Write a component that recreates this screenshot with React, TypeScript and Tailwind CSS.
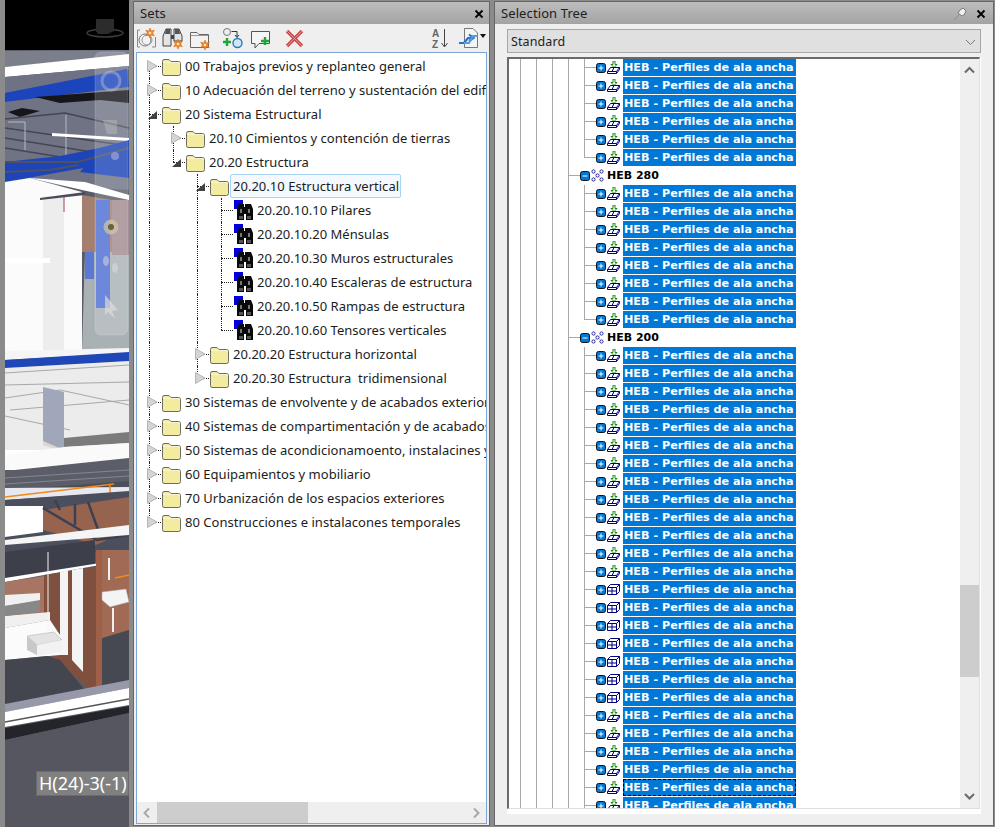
import type { ReactNode } from "react";

const uiFont = "font-['Noto_Sans',sans-serif]";

type SetRow = {
  label: string;
  level: number;
  guides: boolean[];
  state?: "open" | "closed";
  kind?: "folder" | "set";
  last?: boolean;
  first?: boolean;
  selected?: boolean;
};

const setRows: SetRow[] = [
  { label: "00 Trabajos previos y replanteo general", level: 0, guides: [], state: "closed", first: true },
  { label: "10 Adecuación del terreno y sustentación del edificio", level: 0, guides: [], state: "closed" },
  { label: "20 Sistema Estructural", level: 0, guides: [], state: "open" },
  { label: "20.10 Cimientos y contención de tierras", level: 1, guides: [true], state: "closed" },
  { label: "20.20 Estructura", level: 1, guides: [true], state: "open", last: true },
  { label: "20.20.10 Estructura vertical", level: 2, guides: [true, false], state: "open", selected: true },
  { label: "20.20.10.10 Pilares", level: 3, guides: [true, false, true], kind: "set" },
  { label: "20.20.10.20 Ménsulas", level: 3, guides: [true, false, true], kind: "set" },
  { label: "20.20.10.30 Muros estructurales", level: 3, guides: [true, false, true], kind: "set" },
  { label: "20.20.10.40 Escaleras de estructura", level: 3, guides: [true, false, true], kind: "set" },
  { label: "20.20.10.50 Rampas de estructura", level: 3, guides: [true, false, true], kind: "set" },
  { label: "20.20.10.60 Tensores verticales", level: 3, guides: [true, false, true], kind: "set", last: true },
  { label: "20.20.20 Estructura horizontal", level: 2, guides: [true, false], state: "closed" },
  { label: "20.20.30 Estructura  tridimensional", level: 2, guides: [true, false], state: "closed", last: true },
  { label: "30 Sistemas de envolvente y de acabados exteriores", level: 0, guides: [], state: "closed" },
  { label: "40 Sistemas de compartimentación y de acabados interiores", level: 0, guides: [], state: "closed" },
  { label: "50 Sistemas de acondicionamoento, instalacines y equipos", level: 0, guides: [], state: "closed" },
  { label: "60 Equipamientos y mobiliario", level: 0, guides: [], state: "closed" },
  { label: "70 Urbanización de los espacios exteriores", level: 0, guides: [], state: "closed" },
  { label: "80 Construcciones e instalacones temporales", level: 0, guides: [], state: "closed", last: true },
];

type TreeRow = {
  label: string;
  icon: "tile" | "cube" | "group";
  open?: boolean;
  end?: boolean;
  focus?: boolean;
};

const leaf = (icon: "tile" | "cube", extra: Partial<TreeRow> = {}): TreeRow => ({
  label: "HEB - Perfiles de ala ancha",
  icon,
  ...extra,
});

const treeRows: TreeRow[] = [
  ...Array.from({ length: 5 }, () => leaf("tile")),
  leaf("tile", { end: true }),
  { label: "HEB 280", icon: "group", open: true },
  ...Array.from({ length: 7 }, () => leaf("tile")),
  leaf("tile", { end: true }),
  { label: "HEB 200", icon: "group", open: true },
  ...Array.from({ length: 13 }, () => leaf("tile")),
  ...Array.from({ length: 7 }, () => leaf("cube")),
  ...Array.from({ length: 4 }, () => leaf("tile")),
  leaf("tile", { focus: true }),
  leaf("tile"),
];

function Folder() {
  return (
    <svg width="20" height="20" viewBox="0 0 20 20" className="shrink-0">
      <path
        d="M1.5 5.5 Q1.5 3.5 3 3.5 H8 L10 5.5 H17.5 Q19.5 5.5 19.5 7.5 V17.5 Q19.5 19.5 17.5 19.5 H3 Q1.5 19.5 1.5 17.5 Z"
        fill="#f3eb9f"
        stroke="#6d6d60"
      />
      <path d="M2.5 6.5 H18.5" stroke="#fbf7cf" />
    </svg>
  );
}

function Binoculars() {
  return (
    <svg width="20" height="21" viewBox="0 0 20 21" className="shrink-0">
      <rect x="0" y="0" width="9" height="9" fill="#0000d8" />
      <path d="M5 4 H10 V7 H11 V4 H17 L19 9 V20 H12 V14 H10 V20 H3 V9 Z" fill="#0a0a0a" />
      <rect x="6" y="9" width="2" height="4" fill="#777" />
      <rect x="14" y="9" width="2" height="4" fill="#777" />
      <rect x="5" y="16" width="4" height="3" fill="#555" />
      <rect x="13" y="16" width="4" height="3" fill="#555" />
    </svg>
  );
}

function Expander({ state }: { state: "open" | "closed" }) {
  return (
    <svg width="11" height="12" viewBox="0 0 11 12" className="absolute left-[-2px] top-[6px]">
      {state === "closed" ? (
        <path d="M0.5 0.5 L10 6 L0.5 11.5 Z" fill="#d4d4d4" stroke="#b5b5b5" />
      ) : (
        <path d="M10 3 V11 H1 Z" fill="#404040" />
      )}
    </svg>
  );
}

function SetTreeRow({ row }: { row: SetRow }) {
  return (
    <div className="flex h-[24px] shrink-0 items-stretch">
      {row.guides.map((on, i) => (
        <div key={i} className={`w-[24px] shrink-0 ${on ? "border-l border-dotted border-[#222]" : ""}`} />
      ))}
      <div className="relative w-[12px] shrink-0">
        <div
          className={`absolute left-0 w-0 border-l border-dotted border-[#222] ${
            row.first ? "top-[12px] bottom-0" : row.last ? "top-0 h-[12px]" : "top-0 bottom-0"
          }`}
        />
        <div className="absolute left-0 right-0 top-[12px] border-t border-dotted border-[#222]" />
        {row.state && <Expander state={row.state} />}
      </div>
      <div className={`flex items-center ${row.kind === "set" ? "ml-[1px]" : ""}`}>
        {row.kind === "set" ? <Binoculars /> : <Folder />}
      </div>
      <span
        className={`self-center whitespace-pre text-[13px] leading-[22px] tracking-[0.02px] text-[#1c1c1c] ${
          row.selected
            ? "ml-[1px] h-[24px] rounded-[2px] border border-[#a8d4f5] bg-[#f3f9fe] pl-[2px] pr-[1px]"
            : row.kind === "set"
              ? "ml-[3px]"
              : "ml-[4px]"
        }`}
      >
        {row.label}
      </span>
    </div>
  );
}

function Star({ x, y }: { x: number; y: number }) {
  return (
    <g transform={`translate(${x} ${y})`}>
      <path
        d="M0 -5 L1.3 -2 L4.3 -2.8 L2.6 0 L4.3 2.8 L1.3 2 L0 5 L-1.3 2 L-4.3 2.8 L-2.6 0 L-4.3 -2.8 L-1.3 -2 Z"
        fill="#f08a24"
        stroke="#c8601a"
        strokeWidth="0.5"
      />
      <circle r="1.3" fill="#ffe9b0" />
    </g>
  );
}

function GreenPlus({ x, y }: { x: number; y: number }) {
  return <path d={`M${x - 4} ${y} H${x + 4} M${x} ${y - 4} V${y + 4}`} stroke="#1fa637" strokeWidth="2.4" />;
}

function ToolIcon({ width, children }: { width: number; children: ReactNode }) {
  return (
    <svg width={width} height="24" viewBox={`0 0 ${width} 24`} className="shrink-0">
      {children}
    </svg>
  );
}

function SetsToolbar() {
  return (
    <div className="flex h-[28px] items-center pl-[2px] pr-[3px]">
      <ToolIcon width={22}>
        <path d="M4 4 H1.5 V21 H4 M16 21 H19.5 V11" fill="none" stroke="#8a8a8a" />
        <circle cx="9" cy="14" r="6" fill="#f2f2f2" stroke="#777" />
        <circle cx="11" cy="14" r="5" fill="none" stroke="#999" />
        <Star x={14} y={7} />
      </ToolIcon>
      <div className="w-[4px]" />
      <ToolIcon width={22}>
        <path d="M4 3 H9 V20 H1 V10 Z M12 3 H17 L20 10 V15 H12 Z" fill="#e4e4e4" stroke="#444" />
        <path d="M4 3 H8 V8 H3 Z M13 3 H17 L18 8 H13 Z" fill="#555" />
        <path d="M9 9 H12 V13 H9 Z" fill="#444" />
        <Star x={16} y={18} />
      </ToolIcon>
      <div className="w-[5px]" />
      <ToolIcon width={22}>
        <path d="M1.5 6.5 H8 L10 8.5 H19.5 V21.5 H1.5 Z" fill="#f2f2f2" stroke="#666" />
        <path d="M2 9.5 H19" stroke="#999" />
        <Star x={16} y={19} />
      </ToolIcon>
      <div className="w-[11px]" />
      <ToolIcon width={22}>
        <circle cx="5" cy="6" r="3.5" fill="#eee" stroke="#777" />
        <path d="M9.5 5.5 H15 V11 M13 9 L15 11.5 L17 9" fill="none" stroke="#333" />
        <GreenPlus x={5} y={16} />
        <circle cx="15.5" cy="17" r="4.5" fill="#cfe6f8" stroke="#2c78b8" strokeWidth="1.4" />
      </ToolIcon>
      <div className="w-[6px]" />
      <ToolIcon width={22}>
        <path d="M1.5 5.5 H19.5 V17.5 H9 L5 22 V17.5 H1.5 Z" fill="#f5f5f5" stroke="#555" />
        <GreenPlus x={15} y={15} />
      </ToolIcon>
      <div className="w-[11px]" />
      <ToolIcon width={22}>
        <path d="M4 5 L19 20 M19 5 L4 20" stroke="#c9494a" strokeWidth="3.4" />
        <path d="M4 5 L19 20 M19 5 L4 20" stroke="#ec8f8d" strokeWidth="1" />
      </ToolIcon>
      <div className="ml-auto flex items-center">
        <ToolIcon width={18}>
          <text x="1" y="11" className="font-['Liberation_Sans',sans-serif] text-[10px] font-bold" fill="#666">
            A
          </text>
          <text x="1" y="22" className="font-['Liberation_Sans',sans-serif] text-[10px] font-bold" fill="#666">
            Z
          </text>
          <path d="M13.5 3 V20 M10.5 17 L13.5 21 L16.5 17" fill="none" stroke="#444" />
        </ToolIcon>
        <div className="w-[9px]" />
        <ToolIcon width={22}>
          <path d="M6.5 2.5 H15 L19.5 7 V21.5 H6.5 Z" fill="#f4f4f4" stroke="#777" />
          <path d="M1 17 H6 L10 12 H15 M11 8.5 L15.5 12 L11 15" fill="none" stroke="#2b73c6" strokeWidth="2.2" />
          <path d="M20 10 H15 L11 17 H6" fill="none" stroke="#5a9ae0" strokeWidth="2.2" />
        </ToolIcon>
        <svg width="6" height="4" viewBox="0 0 6 4" className="mb-[4px] shrink-0">
          <path d="M0 0 H6 L3 4 Z" fill="#111" />
        </svg>
      </div>
    </div>
  );
}

function ScrollChevron({
  dir,
  color = "#6a6a6a",
  weight = 2,
}: {
  dir: "up" | "down" | "left" | "right";
  color?: string;
  weight?: number;
}) {
  const d = {
    up: "M1 7 L5.5 2.5 L10 7",
    down: "M1 2.5 L5.5 7 L10 2.5",
    left: "M7 1 L2.5 5.5 L7 10",
    right: "M3 1 L7.5 5.5 L3 10",
  }[dir];
  return (
    <svg width="11" height="11" viewBox="0 0 11 10" className="shrink-0">
      <path d={d} fill="none" stroke={color} strokeWidth={weight} />
    </svg>
  );
}

function PlusBox({ open }: { open?: boolean }) {
  return (
    <svg width="10" height="10" viewBox="0 0 10 10" className="shrink-0">
      <rect x="0.5" y="0.5" width="9" height="9" rx="2" fill="#0078d7" stroke="#0a1420" />
      <path d={open ? "M2.5 5 H7.5" : "M2.5 5 H7.5 M5 2.5 V7.5"} stroke="#fff" />
    </svg>
  );
}

function NodeIcon({ icon }: { icon: TreeRow["icon"] }) {
  if (icon === "group") {
    return (
      <svg width="13" height="13" viewBox="0 0 13 13" className="shrink-0">
        <path d="M2 2 L11 11 M11 2 L2 11" stroke="#8a8ab8" strokeDasharray="1 1" />
        <circle cx="2.5" cy="2.5" r="1.6" fill="#fff" stroke="#000080" strokeWidth="0.8" />
        <circle cx="10.5" cy="2.5" r="1.6" fill="#fff" stroke="#000080" strokeWidth="0.8" />
        <circle cx="6.5" cy="6.5" r="1.6" fill="#fff" stroke="#000080" strokeWidth="0.8" />
        <circle cx="2.5" cy="10.5" r="1.6" fill="#fff" stroke="#000080" strokeWidth="0.8" />
        <circle cx="10.5" cy="10.5" r="1.6" fill="#fff" stroke="#000080" strokeWidth="0.8" />
      </svg>
    );
  }
  if (icon === "cube") {
    return (
      <svg width="13" height="11" viewBox="0 0 13 11" className="shrink-0">
        <path
          d="M0.5 3.5 H9.5 V10.5 H0.5 Z M0.5 3.5 L3.5 0.5 H12.5 L9.5 3.5 M12.5 0.5 V7.5 L9.5 10.5 M0.5 7 H9.5 M5 3.5 V10.5"
          fill="none"
          stroke="#000080"
        />
      </svg>
    );
  }
  return (
    <svg width="13" height="13" viewBox="0 0 13 13" className="shrink-0">
      <path d="M6 0 H8 V3.5 H10 L7 6.5 L4 3.5 H6 Z" fill="#fff" stroke="#008000" strokeWidth="0.9" />
      <path
        d="M3.5 6.5 H12.5 V8.5 L9.5 12.5 H0.5 V10.5 Z M0.5 10.5 H9.5 L12.5 6.5 M9.5 10.5 V12.5 M5 10.5 L7 6.5"
        fill="none"
        stroke="#000080"
      />
    </svg>
  );
}

function TreeNode({ row }: { row: TreeRow }) {
  const isGroup = row.icon === "group";
  const cells = isGroup ? 3 : 4;
  return (
    <div className="flex h-[18px] shrink-0 items-stretch">
      {Array.from({ length: cells }, (_, i) => (
        <div key={i} className="w-[16px] shrink-0 border-l border-[#a8a8a8]" />
      ))}
      <div className="relative w-[12px] shrink-0">
        <div className={`absolute left-0 top-0 w-0 border-l border-[#a8a8a8] ${row.end ? "h-[9px]" : "bottom-0"}`} />
        <div className="absolute left-0 right-0 top-[8px] border-t border-[#a8a8a8]" />
      </div>
      <div className="flex items-center pb-[1px]">
        <PlusBox open={row.open} />
      </div>
      <div className="ml-[1px] flex items-center pb-[1px]">
        <NodeIcon icon={row.icon} />
      </div>
      {isGroup ? (
        <span className="ml-[3px] h-[17px] font-['DejaVu_Sans',sans-serif] text-[11px] font-bold leading-[18px] text-black">
          {row.label}
        </span>
      ) : (
        <span
          className={`ml-[3px] h-[17px] w-[173px] whitespace-nowrap bg-[#0078d7] pl-[1px] font-['DejaVu_Sans',sans-serif] text-[11.2px] font-bold leading-[18px] text-white ${
            row.focus ? "outline-1 outline-dashed outline-black -outline-offset-1" : ""
          }`}
        >
          {row.label}
        </span>
      )}
    </div>
  );
}

function TitleBar({ title, children }: { title: string; children: ReactNode }) {
  return (
    <div className="flex h-[22px] shrink-0 items-center justify-between bg-gradient-to-b from-[#bdbdbd] to-[#a3a3a3] pl-[6px] pr-[5px] pt-[1px]">
      <span className="text-[13px] tracking-[0.1px] text-[#202020]">{title}</span>
      {children}
    </div>
  );
}

function CloseX() {
  return (
    <svg width="10" height="10" viewBox="0 0 10 10" className="shrink-0">
      <path d="M1.5 1.5 L8.5 8.5 M8.5 1.5 L1.5 8.5" stroke="#000" strokeWidth="1.8" />
    </svg>
  );
}

function Scene() {
  return (
    <svg viewBox="5 0 124 827" width="124" height="827" preserveAspectRatio="none" className="block">
      <rect x="5" y="0" width="124" height="827" fill="#595c68" />
      <rect x="5" y="0" width="124" height="50" fill="#000" />
      <ellipse cx="105" cy="33" rx="18" ry="4" fill="none" stroke="#3c3c3c" strokeWidth="1.5" />
      <path d="M96 19 H114 V31 L108 34 H98 L96 31 Z" fill="#2c2c2c" />

      <path d="M5 51 L129 50 V55 L5 67 Z" fill="#7b7f8c" />
      <path d="M5 67 L129 54 V66 L5 77 Z" fill="#ffffff" />
      <path d="M5 77 L129 66 V70 L5 93 Z" fill="#6e7284" />
      <path d="M5 93 L127 69 L129 87 L5 102 Z" fill="#1c45bd" />
      <path d="M5 102 L129 87 V190 L5 182 Z" fill="#6f7384" />
      <path d="M8 112 L22 108 L40 111 L20 117 Z M35 97 L129 90 V103 L100 100 L60 103 Z" fill="#15151a" />
      <path d="M5 119 L65 113 L129 128 M5 128 L129 146 M5 138 L129 158 M5 148 L129 168" fill="none" stroke="#444654" strokeWidth="1.5" />
      <path d="M8 122 H25 V150 M66 115 V155" fill="none" stroke="#b8bac4" strokeWidth="1" />
      <path d="M52 133 L129 138 V141 L52 136 Z" fill="#ffffff" />
      <path d="M5 162 L60 156 L129 142 V150 L100 165 L5 182 Z" fill="#1d44b8" />
      <path d="M100 148 L129 140 V178 L80 172 Z" fill="#1d44b8" />
      <path d="M5 162 L78 162 L129 148 M5 172 L50 170 L78 165" fill="none" stroke="#4d5163" strokeWidth="2" />
      <path d="M30 178 L85 182 L129 195 V200 L82 190 Z" fill="#ffffff" />
      <path d="M5 182 L30 178 L82 192 V351 H5 Z" fill="#fbfbfb" />
      <rect x="43" y="196" width="21" height="155" fill="#ededed" />
      <path d="M5 258 H50 V263 H5 Z" fill="#ffffff" />
      <path d="M40 198 L85 192 V195 L40 200 Z" fill="#4a4c5c" />
      <path d="M64 197 V212" stroke="#a3424a" />
      <path d="M82 195 L129 203 V252 H82 Z" fill="#a47f70" />
      <path d="M85 252 H129 V350 H82 Z" fill="#a9b1b5" />
      <path d="M85 252 H94 V279 H85 Z" fill="#5a78d4" />
      <path d="M96 200 H110 V308 H96 Z" fill="#4d6dd2" />
      <path d="M112 200 H129 V255 H112 Z" fill="#a08a90" />
      <path d="M5 351 L129 348 V353 L5 360 Z" fill="#f5f5f5" />
      <path d="M5 360 L129 352 V361 L5 368 Z" fill="#1f47b8" />
      <path d="M5 368 L129 361 V465 L5 470 Z" fill="#ececec" />
      <path d="M5 373 L129 365 M5 385 L129 382 M5 398 L60 390 L129 405 M10 410 L129 400 M5 416 L70 430" fill="none" stroke="#a8a8a8" />
      <path d="M43 387 L64 392 V452 L43 441 Z" fill="#a1a7bb" />
      <path d="M43 441 L64 450 V452 L43 445 Z" fill="#d8d8cc" />
      <path d="M64 438 L129 432 V443 L64 447 Z" fill="#7b7b7b" />
      <path d="M5 450 H64 V470 H5 Z" fill="#ffffff" />
      <path d="M64 447 L129 443 V460 L5 470 V455 Z" fill="#fafafa" />
      <path d="M5 471 L129 458 V486 L5 490 Z" fill="#5b5e68" />
      <path d="M5 478 L129 470 M5 484 L129 476" stroke="#85878f" />
      <path d="M5 490 L129 481 V490 L5 500 Z" fill="#4d4f58" />
      <path d="M5 488 L129 487 V492 L5 500 Z" fill="#e8e8f0" />
      <path d="M5 497 L114 484 M110 484 V550" fill="none" stroke="#f08a18" strokeWidth="1.5" />
      <path d="M5 500 L129 491 V550 L5 560 Z" fill="#4b4e5c" />
      <path d="M5 506 H43 V532 L5 537 Z" fill="#ffffff" />
      <path d="M43 510 L129 497 V530 L96 545 L43 530 Z" fill="#96634f" />
      <path d="M43 508 L97 540 L129 535 M60 510 L55 500 M75 504 L75 525 M88 502 L100 535" fill="none" stroke="#3d4050" strokeWidth="2.5" />
      <path d="M5 540 L129 525 V535 L5 545 Z" fill="#f5f5f5" />
      <path d="M5 552 L95 540 V566 L5 580 Z" fill="#3d3f4a" />
      <path d="M5 578 L100 563 V565 L5 582 Z" fill="#ffffff" />
      <path d="M5 582 L44 576 V660 L5 660 Z" fill="#a87463" />
      <path d="M44 575 L96 567 V695 L44 650 Z" fill="#80503f" />
      <path d="M60 572 L68 570 V655 L60 655 Z M72 570 L83 568 V672 L72 660 Z" fill="#f4f4f4" />
      <path d="M96 550 H102 V693 H96 Z" fill="#a06048" />
      <path d="M102 550 H129 V632 L102 640 Z" fill="#a06a54" />
      <path d="M5 595 L40 593 V601 L5 606 Z M5 616 L50 612 V620 L5 628 Z" fill="#f0f0f0" />
      <path d="M5 606 L40 600 V612 L5 616 Z" fill="#888" />
      <path d="M5 628 L50 620 L60 635 V655 L5 660 Z" fill="#fbfbfb" />
      <path d="M27 636 L54 632 L62 640 L37 645 Z" fill="#e3e3e3" stroke="#aaa" strokeWidth="0.5" />
      <path d="M27 636 L37 645 V655 L27 650 Z" fill="#c8c8c8" />
      <path d="M37 645 L62 640 V652 L37 656 Z" fill="#f2f2f2" />
      <path d="M46 656 V665 L52 672 V694" fill="none" stroke="#d0d4e8" strokeWidth="2" />
      <path d="M48 552 V630" stroke="#f5f5f5" />
      <path d="M102 592 L126 589 L129 602 L110 607 L102 600 Z" fill="#f4f4f4" stroke="#aaa" strokeWidth="0.5" />
      <path d="M109 558 V580 M113 608 V632" stroke="#f0f0f0" strokeWidth="2" />
      <path d="M115 578 L129 575" stroke="#f08a18" strokeWidth="1.5" />
      <path d="M5 660 L47 656 L60 660 L85 690 L5 705 Z" fill="#44464f" />
      <path d="M102 638 L129 630 V680 L102 690 Z" fill="#474952" />
      <path d="M5 704 L129 680 V688 L5 712 Z" fill="#9799ab" />
      <path d="M5 712 L129 688 V705 L5 727 Z" fill="#ffffff" />
      <path d="M5 722 L129 699" stroke="#555" strokeWidth="1.5" />
      <path d="M5 728 L129 706 V713 L5 740 Z" fill="#24252b" />
      <path d="M5 740 L129 713 V827 H5 Z" fill="#55565f" />

      <rect x="95" y="52" width="33" height="283" rx="6" fill="#ffffff" fillOpacity="0.18" stroke="#ffffff" strokeOpacity="0.15" />
      <circle cx="111" cy="81" r="9" fill="none" stroke="#d8d8d8" strokeOpacity="0.35" strokeWidth="3" />
      <path d="M103 120 H117 V134 H107 Z" fill="#d5d5d5" fillOpacity="0.3" />
      <circle cx="115" cy="156" r="4" fill="#aab0e0" fillOpacity="0.6" />
      <circle cx="111" cy="227" r="7.5" fill="#cfc9a8" fillOpacity="0.7" />
      <circle cx="111" cy="227" r="3" fill="#6a6040" />
      <ellipse cx="106" cy="261" rx="3" ry="5" fill="#e0e0e0" fillOpacity="0.5" />
      <ellipse cx="115" cy="268" rx="3" ry="5" fill="#e0e0e0" fillOpacity="0.5" />
      <path d="M105 295 L118 310 L112 311 L115 318 L112 316 L108 312 L105 315 Z" fill="#dcdcdc" fillOpacity="0.7" />
    </svg>
  );
}

export default function App() {
  return (
    <div className={`flex h-[827px] w-[995px] overflow-hidden bg-[#8b8b8b] pl-[5px] ${uiFont}`}>
      <div className="relative h-[827px] w-[124px] shrink-0 overflow-hidden">
        <Scene />
        <div className="absolute bottom-[31px] left-[31px] flex h-[25px] w-[93px] items-center border border-[#6b6b6b] bg-[#808080] pl-[2px] text-[18px] text-white">
          H(24)-3(-1)
        </div>
      </div>

      <section className="ml-[4px] mt-[1px] mb-[1px] flex w-[357px] shrink-0 flex-col border border-[#666] bg-[#efefef]">
        <TitleBar title="Sets">
          <CloseX />
        </TitleBar>
        <SetsToolbar />
        <div className="mx-[2px] mb-[1px] flex min-h-0 flex-1 flex-col border border-[#7ea6d6] bg-white">
          <div className="min-h-0 flex-1 overflow-hidden pl-[12px] pt-[1px]">
            {setRows.map((row) => (
              <SetTreeRow key={row.label} row={row} />
            ))}
          </div>
          <div className="flex h-[21px] shrink-0 items-center bg-[#efefef]">
            <div className="flex w-[20px] justify-center">
              <ScrollChevron dir="left" color="#a8a8a8" />
            </div>
            <div className="h-full w-[151px] bg-[#cdcdcd]" />
            <div className="ml-auto flex w-[20px] justify-center">
              <ScrollChevron dir="right" color="#a8a8a8" />
            </div>
          </div>
        </div>
      </section>

      <section className="ml-[4px] mt-[1px] mb-[1px] flex w-[500px] shrink-0 flex-col border border-[#666] bg-[#efefef]">
        <TitleBar title="Selection Tree">
          <div className="flex items-center gap-[9px] pr-[2px]">
            <svg width="13" height="13" viewBox="0 0 13 13" className="shrink-0">
              <path d="M0 13 L6 7" stroke="#8c8c8c" />
              <path d="M6 3 L9 1 L12 4 L10 8 L8 9 L4 6 Z" fill="#f0f0f0" stroke="#777" />
            </svg>
            <CloseX />
          </div>
        </TitleBar>
        <div className="mx-[12px] mt-[5px] flex h-[24px] shrink-0 items-center justify-between border border-[#a8a8a8] bg-[#e0e0e0] pl-[3px] pr-[4px] pt-[2px] text-[12.5px] tracking-[0.1px] text-[#222]">
          <span>Standard</span>
          <ScrollChevron dir="down" color="#777" weight={1} />
        </div>
        <div className="mx-[12px] mt-[4px] mb-[11px] flex min-h-0 flex-1 flex-col bg-white pb-[5px] pr-[1px]">
          <div className="flex min-h-0 flex-1 border-l-2 border-t-2 border-r border-b border-l-[#6a6a6a] border-t-[#6a6a6a] border-r-[#dedede] border-b-[#dedede]">
            <div className="min-w-0 flex-1 overflow-hidden pl-[11px]">
              {treeRows.map((row, i) => (
                <TreeNode key={i} row={row} />
              ))}
            </div>
            <div className="flex w-[19px] shrink-0 flex-col items-center bg-[#efefef] py-[6px]">
              <ScrollChevron dir="up" />
              <div className="mt-[509px] h-[92px] w-full bg-[#cdcdcd]" />
              <div className="mt-auto">
                <ScrollChevron dir="down" />
              </div>
            </div>
          </div>
        </div>
      </section>
    </div>
  );
}
